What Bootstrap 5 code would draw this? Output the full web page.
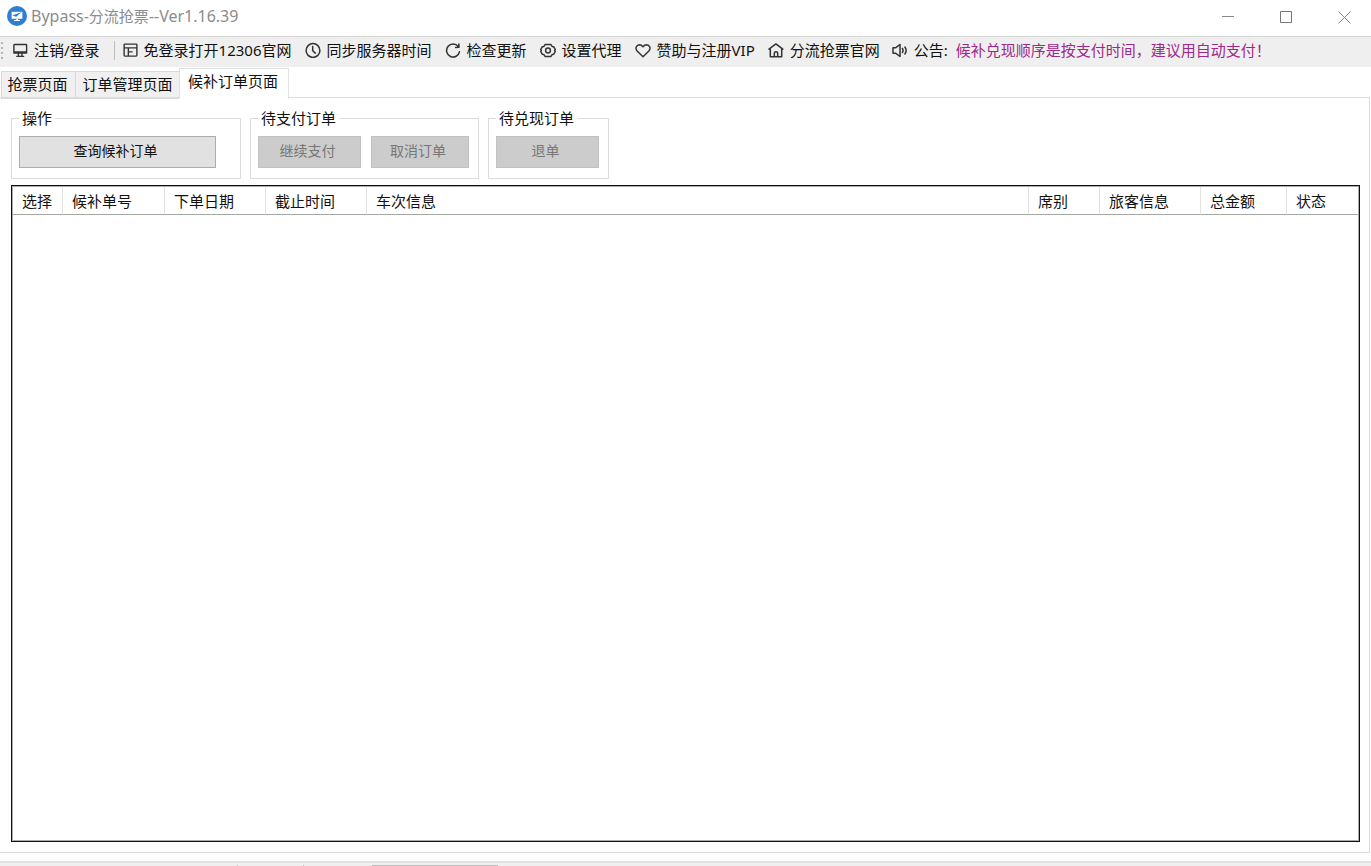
<!DOCTYPE html>
<html lang="zh-CN">
<head>
<meta charset="utf-8">
<meta name="viewport" content="width=device-width, initial-scale=1">
<title>Bypass-分流抢票--Ver1.16.39</title>
<link href="https://cdn.jsdelivr.net/npm/bootstrap@5.3.0/dist/css/bootstrap.min.css" rel="stylesheet">
<style>
  body { font-family: "Noto Sans", "Noto Sans CJK SC", sans-serif; font-size: 15px; line-height: 20px; color: #111; background: #fff; }
  svg { display: block; flex: none; }
  .ink { fill: none; stroke: #333; stroke-width: 1.5; stroke-linecap: round; stroke-linejoin: round; }

  .titlebar { height: 36px; padding: 0 0 4px 7px; color: #8c8c8c; }
  .titlebar h1 { font-size: 16px; line-height: 20px; font-weight: 400; }
  .titlebar h1 span { font-size: 15px; }
  .win-btn { width: 58px; height: 32px; border: 0; background: none; padding: 2px 0 0 4px; }

  .toolbar { height: 31px; padding: 0 0 4px 1px; border-top: 1px solid #d6d6d6; background: #efefef; }
  .tool { display: flex; align-items: center; gap: 6px; border: 0; background: none; padding: 0; margin-right: 13px; color: #111; text-decoration: none; }
  .tool-sep { width: 1px; height: 19px; background: #bdbdbd; margin: 0 8px 0 2px; }
  .notice { color: #a0288c; }

  .page-tabs { height: 31px; padding: 1px 0 0 1px; border: 0; }
  .page-tabs .nav-link { height: 28px; padding: 0 2px 2px 0; width: 75px; margin: 0 -1px 0 0; border: 1px solid #d9d9d9; border-radius: 0; background: #f0f0f0; color: #111; line-height: 22px; }
  .page-tabs .nav-link.tab-wide { width: 105px; padding-right: 0; }
  .page-tabs .nav-link.active { position: relative; z-index: 1; width: 110px; height: 31px; padding-bottom: 5px; background: #fff; border-bottom-color: #fff; color: #111; }

  .page-panel { border: 1px solid #dcdcdc; border-left: 0; margin: -1px 1px 8px 0; padding: 10px 9px 10px 11px; }
  .group-row { gap: 9px; margin-bottom: 6px; }
  .op-group { height: 71px; border: 1px solid #dcdcdc; padding: 0 7px; }
  .op-group legend { float: none; width: auto; margin: 0 0 8px; padding: 0 3px; font-size: 15px; line-height: 20px; }
  .group-query { width: 230px; }
  .group-pay { width: 229px; }
  .group-cash { width: 121px; }
  .btn-op { height: 32px; padding: 0 4px 2px 0; border: 1px solid #adadad; border-radius: 0; background: #e1e1e1; color: #111; font-size: 14px; line-height: 20px; }
  .btn-op:disabled { opacity: 1; background: #ccc; border-color: #c2c2c2; color: #777; }
  .op-query { width: 197px; }
  .op-std { width: 103px; }
  .op-cancel { width: 98px; }
  .op-pair { gap: 10px; }

  .order-list { border: 1px solid #111; box-shadow: inset 0 0 0 1px #a9aca9; padding: 1px; }
  .order-list table { width: 100%; table-layout: fixed; border-collapse: separate; border-spacing: 0; }
  .order-list th { height: 28px; padding: 0 0 0 9px; font-weight: 400; white-space: nowrap; border-right: 1px solid #e2e2e2; border-bottom: 1px solid #a3a8a3; }
  .order-list th:last-child { border-right: 0; }
  .c-pick { width: 50px; } .c-no { width: 102px; } .c-std { width: 101px; }
  .c-seat { width: 71px; } .c-sum { width: 86px; } .c-state { width: 71px; }

  .status-strip { height: 5px; background: #efefef; border-top: 2px solid #e2e2e2; padding: 2px 0 0 237px; }
  .tick { width: 1px; background: #b5b5b5; margin-right: 65px; }
  .status-field { width: 126px; background: #bcbcbc; margin-left: 3px; }
</style>
</head>
<body class="d-flex flex-column vh-100 overflow-hidden">

<header class="titlebar d-flex align-items-center flex-shrink-0">
  <svg width="20" height="20" viewBox="0 0 20 20" class="me-1" aria-hidden="true">
    <circle cx="10" cy="10" r="10" fill="#2f7fd0"/>
    <path d="M4.600 5.800h10.800v7H4.600z" fill="#fff"/><path d="M5.200 9.600 14.800 6 9.200 10.800z" fill="#2f7fd0"/>
    <path d="M9.300 12.800h1.600v1.200h2v1H7.200v-1h2.100z" fill="#fff"/>
  </svg>
  <h1 class="m-0 me-auto">Bypass-<span>分流抢票</span>--Ver1.16.39</h1>
  <button class="win-btn" aria-label="最小化"><svg class="mx-auto" width="13" height="13"><path d="M0 5.500h12" stroke="#888"/></svg></button>
  <button class="win-btn" aria-label="最大化"><svg class="mx-auto" width="13" height="13"><path d="M.5 .5h11v11H.5z" fill="none" stroke="#777"/></svg></button>
  <button class="win-btn" aria-label="关闭"><svg class="mx-auto" width="13" height="13"><path d="M.5 .5l12 12M12.500 .5l-12 12" stroke="#888"/></svg></button>
</header>

<nav class="toolbar d-flex align-items-center flex-shrink-0 text-nowrap">
  <svg width="11" height="20" aria-hidden="true"><path d="M1 2v18" stroke="#b4b4b4" stroke-width="2" stroke-dasharray="2 3"/></svg>
  <button class="tool me-2 pe-1">
    <svg class="ink" width="16" height="16" viewBox="0 0 16 16"><path d="M2.500 2.500h11.500a.6.6 0 0 1 .6.600v7.900H1.900V3.100a.6.6 0 0 1 .6-.6zM1.900 10h12.700M6.400 11.500v2.500M9.900 11.500v2.500M4.800 14.400h6.800" stroke-width="1.400"/></svg>注销/登录</button>
  <span class="tool-sep"></span>
  <button class="tool">
    <svg class="ink" width="15" height="16" viewBox="0 0 16 16"><path d="M2 1.700h12a.8.8 0 0 1 .8.800v11.200a.8.8 0 0 1-.8.800H2a.8.8 0 0 1-.8-.8V2.500a.8.8 0 0 1 .8-.8zM1.200 5.700h13.600M5.700 5.700v8.800M5.700 10h4"/></svg>免登录打开12306官网</button>
  <button class="tool">
    <svg class="ink" width="16" height="16" viewBox="0 0 16 16"><circle cx="8" cy="8.500" r="6.900"/><path d="M7.700 4.500v4.300l2.600 2.300"/></svg>同步服务器时间</button>
  <button class="tool">
    <svg class="ink" width="16" height="16" viewBox="0 0 16 16"><path d="M13.200 4.500A6.500 6.500 0 1 0 14.500 9.700M13.900 1.900l.1 3.400-3.400.1"/></svg>检查更新</button>
  <button class="tool">
    <svg class="ink" width="16" height="16" viewBox="0 0 16 16"><path d="M5.200 2.400h5.600l1.300 2 1.700.4 1.500 2.700-.7 1 .7 1-1.500 2.700-1.700.4-1.300 2H5.200l-1.300-2-1.700-.4L.7 9.500l.7-1-.7-1 1.500-2.700 1.700-.4z"/><circle cx="8" cy="8.500" r="2.400"/></svg>设置代理</button>
  <button class="tool">
    <svg class="ink" width="16" height="16" viewBox="0 0 16 16"><path d="M8 14.800 2.100 9C-.1 6.500 1.200 2.900 4.500 2.800 6.300 2.800 7.200 3.800 8 4.800 8.800 3.800 9.700 2.800 11.500 2.800c3.300.1 4.600 3.700 2.400 6.200z"/></svg>赞助与注册VIP</button>
  <a class="tool me-2" href="#">
    <svg class="ink" width="16" height="16" viewBox="0 0 16 16"><path d="M1 7.100 7.900 1.900l6.900 5.200M2.300 6.600v8.100h11.400V6.600M6.300 14.500V11.300q0-1.500 1.700-1.500t1.700 1.500v3.200"/></svg>分流抢票官网</a>
  <span class="tool me-2 ps-1">
    <svg class="ink" width="16" height="16" viewBox="0 0 16 16"><path d="M1 5.800h2.500L8 2.500v12l-4.500-3.300H1zM10.400 6.500q1.300 2 0 4M12.900 5q2.500 3.500 0 7"/></svg>公告:</span>
  <span class="notice">候补兑现顺序是按支付时间，建议用自动支付！</span>
</nav>

<div class="nav nav-tabs page-tabs align-items-end flex-shrink-0" role="tablist">
  <button class="nav-link" role="tab">抢票页面</button>
  <button class="nav-link tab-wide" role="tab">订单管理页面</button>
  <button class="nav-link active" role="tab" aria-selected="true">候补订单页面</button>
</div>

<main class="page-panel flex-grow-1 d-flex flex-column">
  <div class="group-row d-flex">
    <fieldset class="op-group group-query">
      <legend>操作</legend>
      <button class="btn btn-op op-query">查询候补订单</button>
    </fieldset>
    <fieldset class="op-group group-pay">
      <legend>待支付订单</legend>
      <div class="op-pair d-flex">
        <button class="btn btn-op op-std" disabled>继续支付</button>
        <button class="btn btn-op op-cancel" disabled>取消订单</button>
      </div>
    </fieldset>
    <fieldset class="op-group group-cash">
      <legend>待兑现订单</legend>
      <button class="btn btn-op op-std" disabled>退单</button>
    </fieldset>
  </div>
  <div class="order-list flex-grow-1">
    <table>
      <colgroup><col class="c-pick"><col class="c-no"><col class="c-std"><col class="c-std"><col><col class="c-seat"><col class="c-std"><col class="c-sum"><col class="c-state"></colgroup>
      <thead><tr><th>选择</th><th>候补单号</th><th>下单日期</th><th>截止时间</th><th>车次信息</th><th>席别</th><th>旅客信息</th><th>总金额</th><th>状态</th></tr></thead>
    </table>
  </div>
</main>

<footer class="status-strip d-flex flex-shrink-0">
  <span class="tick"></span><span class="tick"></span><span class="status-field"></span>
</footer>

<script src="https://cdn.jsdelivr.net/npm/bootstrap@5.3.0/dist/js/bootstrap.bundle.min.js"></script>
</body>
</html>
